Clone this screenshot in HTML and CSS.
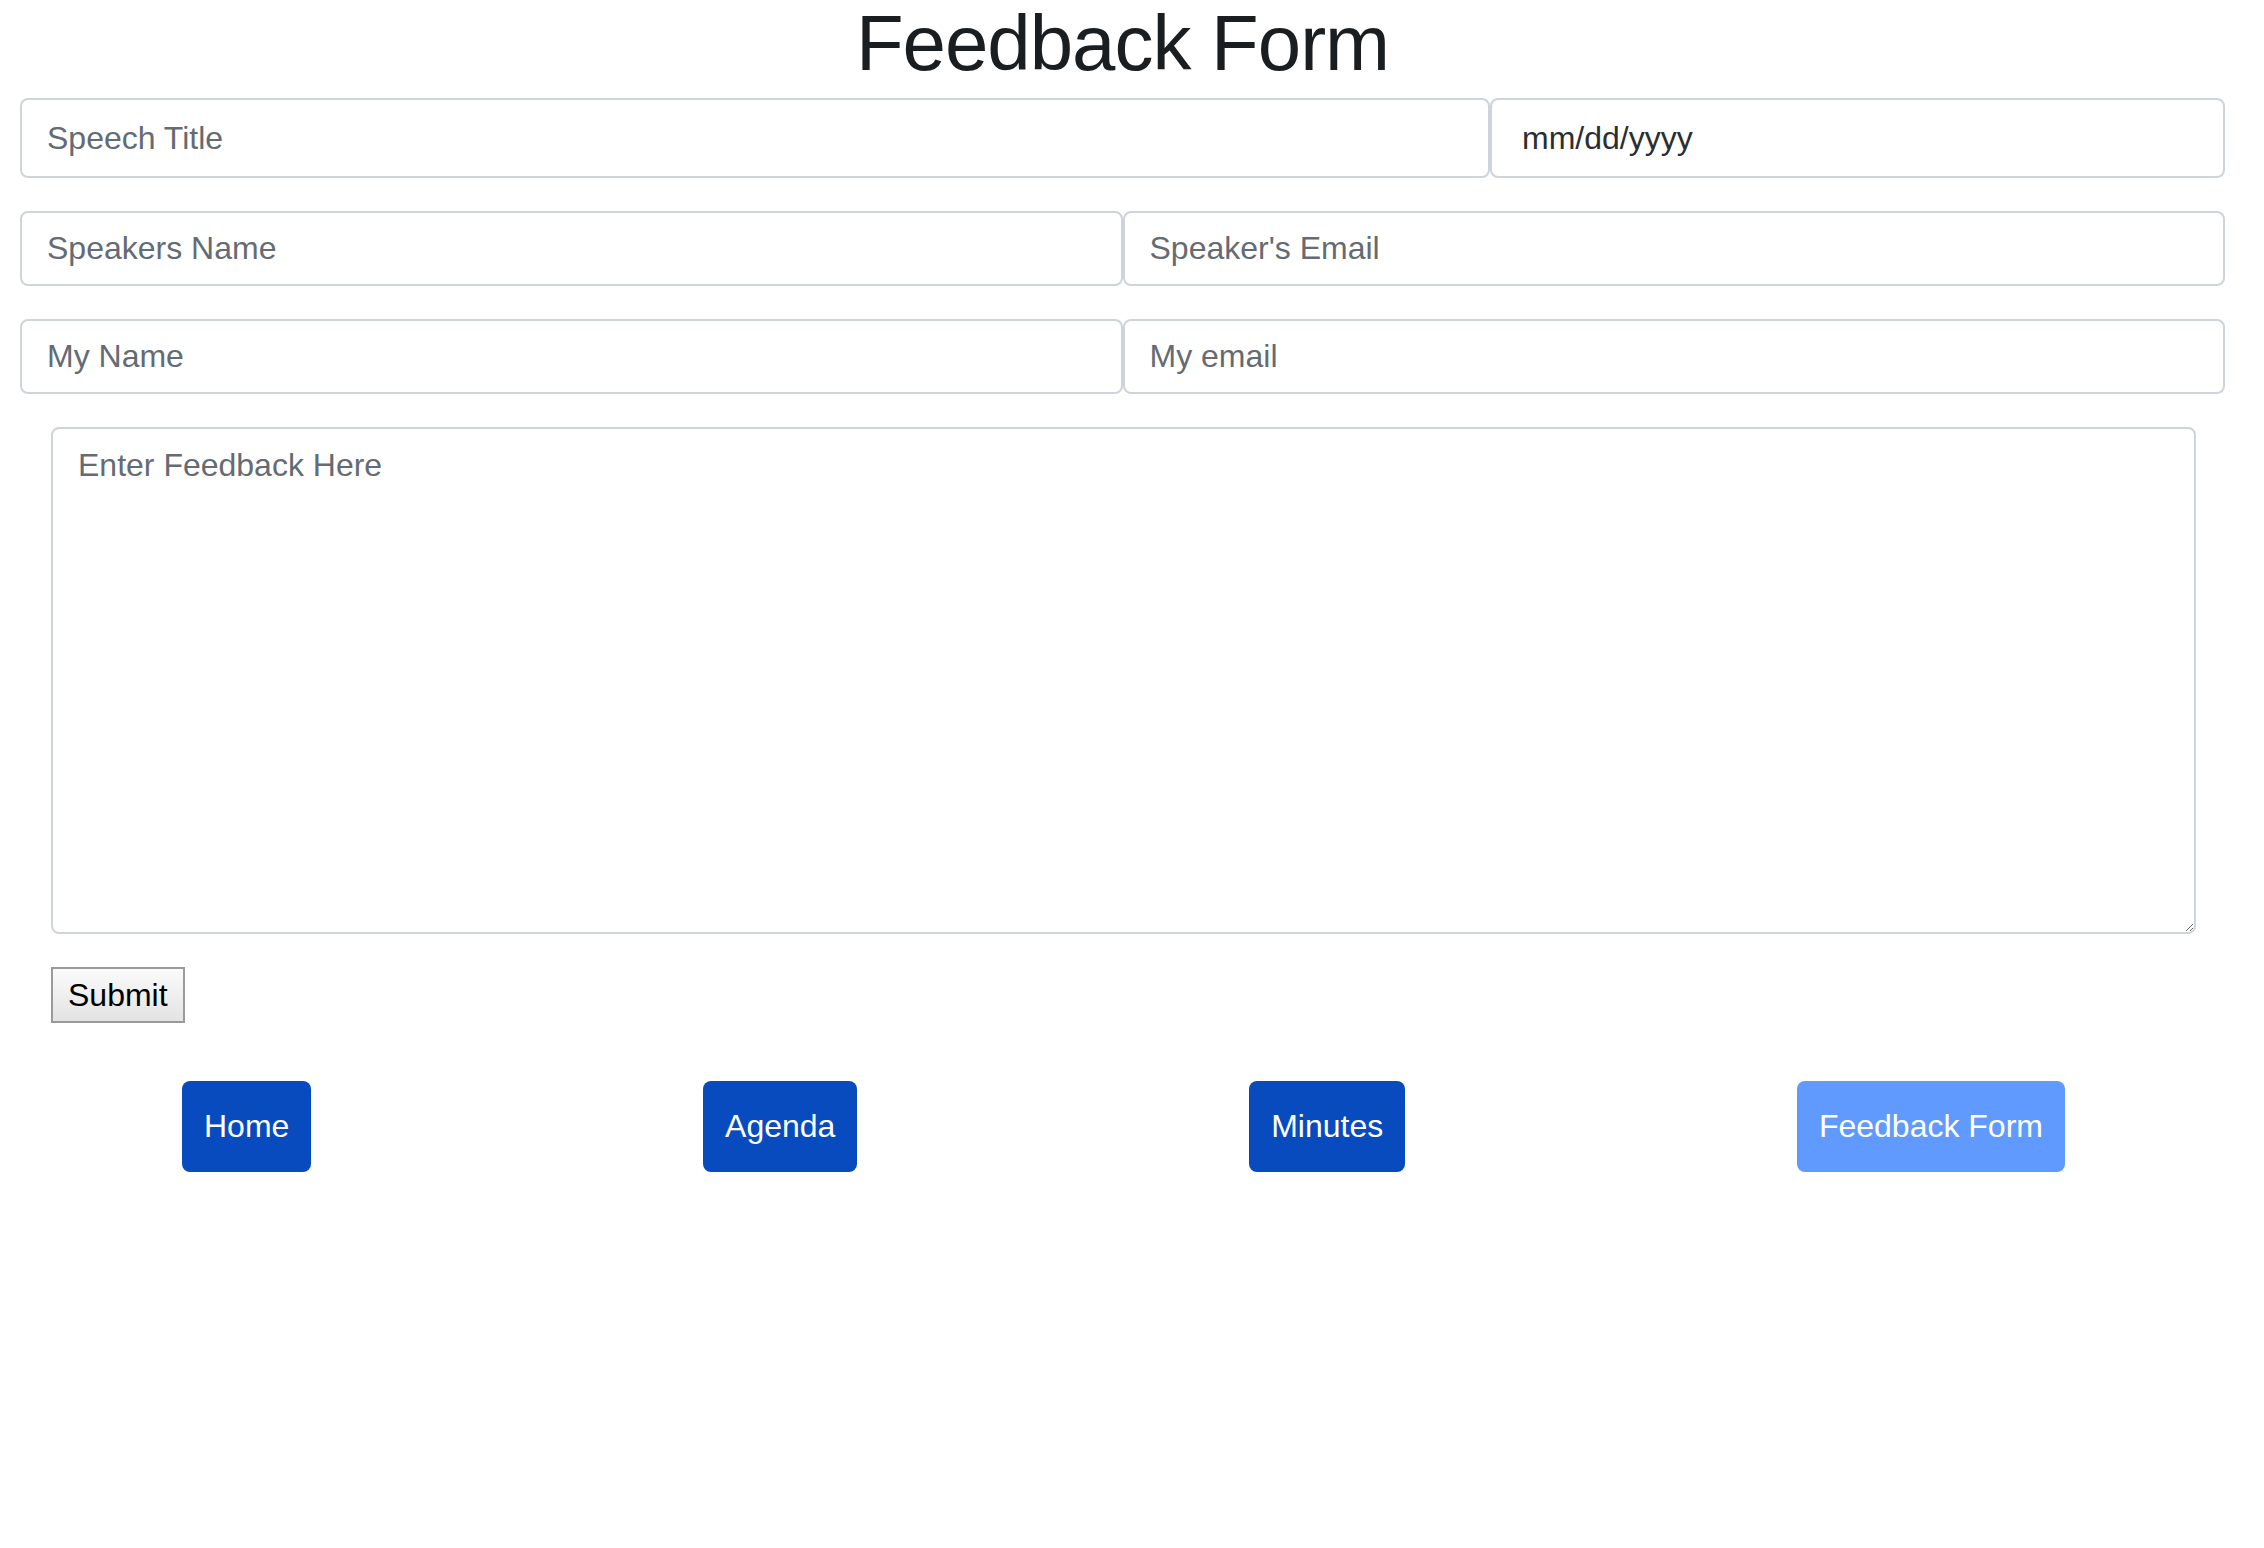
FILE: index.html
```html
<!DOCTYPE html>
<html lang="en">
<head>
<meta charset="utf-8">
<title>Feedback Form</title>
<link rel="stylesheet" href="styles.css">
</head>
<body>
<div class="page">
  <h1 class="title">Feedback Form</h1>
  <form class="form">
    <div class="row row-first">
      <input class="field" type="text" placeholder="Speech Title">
      <input class="field field-date" type="text" value="mm/dd/yyyy" readonly>
    </div>
    <div class="row row-half">
      <input class="field" type="text" placeholder="Speakers Name">
      <input class="field" type="text" placeholder="Speaker's Email">
    </div>
    <div class="row row-half">
      <input class="field" type="text" placeholder="My Name">
      <input class="field" type="text" placeholder="My email">
    </div>
    <div class="inner">
      <textarea class="feedback" placeholder="Enter Feedback Here"></textarea>
      <button class="submit" type="button">Submit</button>
    </div>
  </form>
  <nav class="nav">
    <a class="nav-btn" href="#">Home</a>
    <a class="nav-btn" href="#">Agenda</a>
    <a class="nav-btn" href="#">Minutes</a>
    <a class="nav-btn nav-btn-active" href="#">Feedback Form</a>
  </nav>
</div>
</body>
</html>
```

FILE: styles.css
```css
html, body {
  margin: 0;
  padding: 0;
  background: #ffffff;
}

body {
  font-family: "Liberation Sans", Arial, sans-serif;
  font-size: 32px;
  color: #212529;
}

.page {
  padding: 0 39px 0 20px;
}

.title {
  margin: 0;
  height: 87px;
  line-height: 87px;
  font-size: 78px;
  font-weight: 500;
  letter-spacing: -1px;
  text-align: center;
  color: #1b1e21;
}

.form {
  display: flex;
  flex-direction: column;
  gap: 33px;
  margin-top: 11px;
}

.row {
  display: grid;
}

.row-first {
  grid-template-columns: 2fr 1fr;
  height: 80px;
}

.row-half {
  grid-template-columns: 1fr 1fr;
  height: 75px;
}

.field {
  box-sizing: border-box;
  height: 100%;
  width: 100%;
  margin: 0;
  padding: 0 25px;
  border: 2px solid #ced4da;
  border-radius: 8px;
  background: #ffffff;
  font-family: "Liberation Sans", Arial, sans-serif;
  font-size: 32px;
  color: #495057;
  outline: none;
}

.field::placeholder {
  color: #646b73;
  opacity: 1;
}

.field-date {
  padding-left: 30px;
  color: #2a2e33;
}

.inner {
  display: flex;
  flex-direction: column;
  align-items: flex-start;
  gap: 33px;
  padding: 0 29px 0 31px;
}

.feedback {
  box-sizing: border-box;
  width: 100%;
  height: 507px;
  margin: 0;
  padding: 12px 25px;
  border: 2px solid #ced4da;
  border-radius: 8px;
  font-family: "Liberation Sans", Arial, sans-serif;
  font-size: 32px;
  line-height: 48px;
  color: #495057;
  outline: none;
}

.feedback::placeholder {
  color: #646b73;
  opacity: 1;
}

.submit {
  box-sizing: border-box;
  height: 56px;
  margin: 0;
  padding: 0 15px;
  border: 2px solid #9a9a9a;
  border-radius: 0;
  background: linear-gradient(#fbfbfb, #e3e3e3);
  font-family: "Liberation Sans", Arial, sans-serif;
  font-size: 32px;
  color: #000000;
}

.nav {
  display: flex;
  justify-content: space-between;
  margin-top: 58px;
  padding: 0 160px 0 162px;
}

.nav-btn {
  display: flex;
  align-items: center;
  height: 91px;
  padding: 0 22px;
  border-radius: 8px;
  background: #084bbf;
  color: #ffffff;
  font-size: 32px;
  text-decoration: none;
}

.nav-btn-active {
  background: #609aff;
}
```
